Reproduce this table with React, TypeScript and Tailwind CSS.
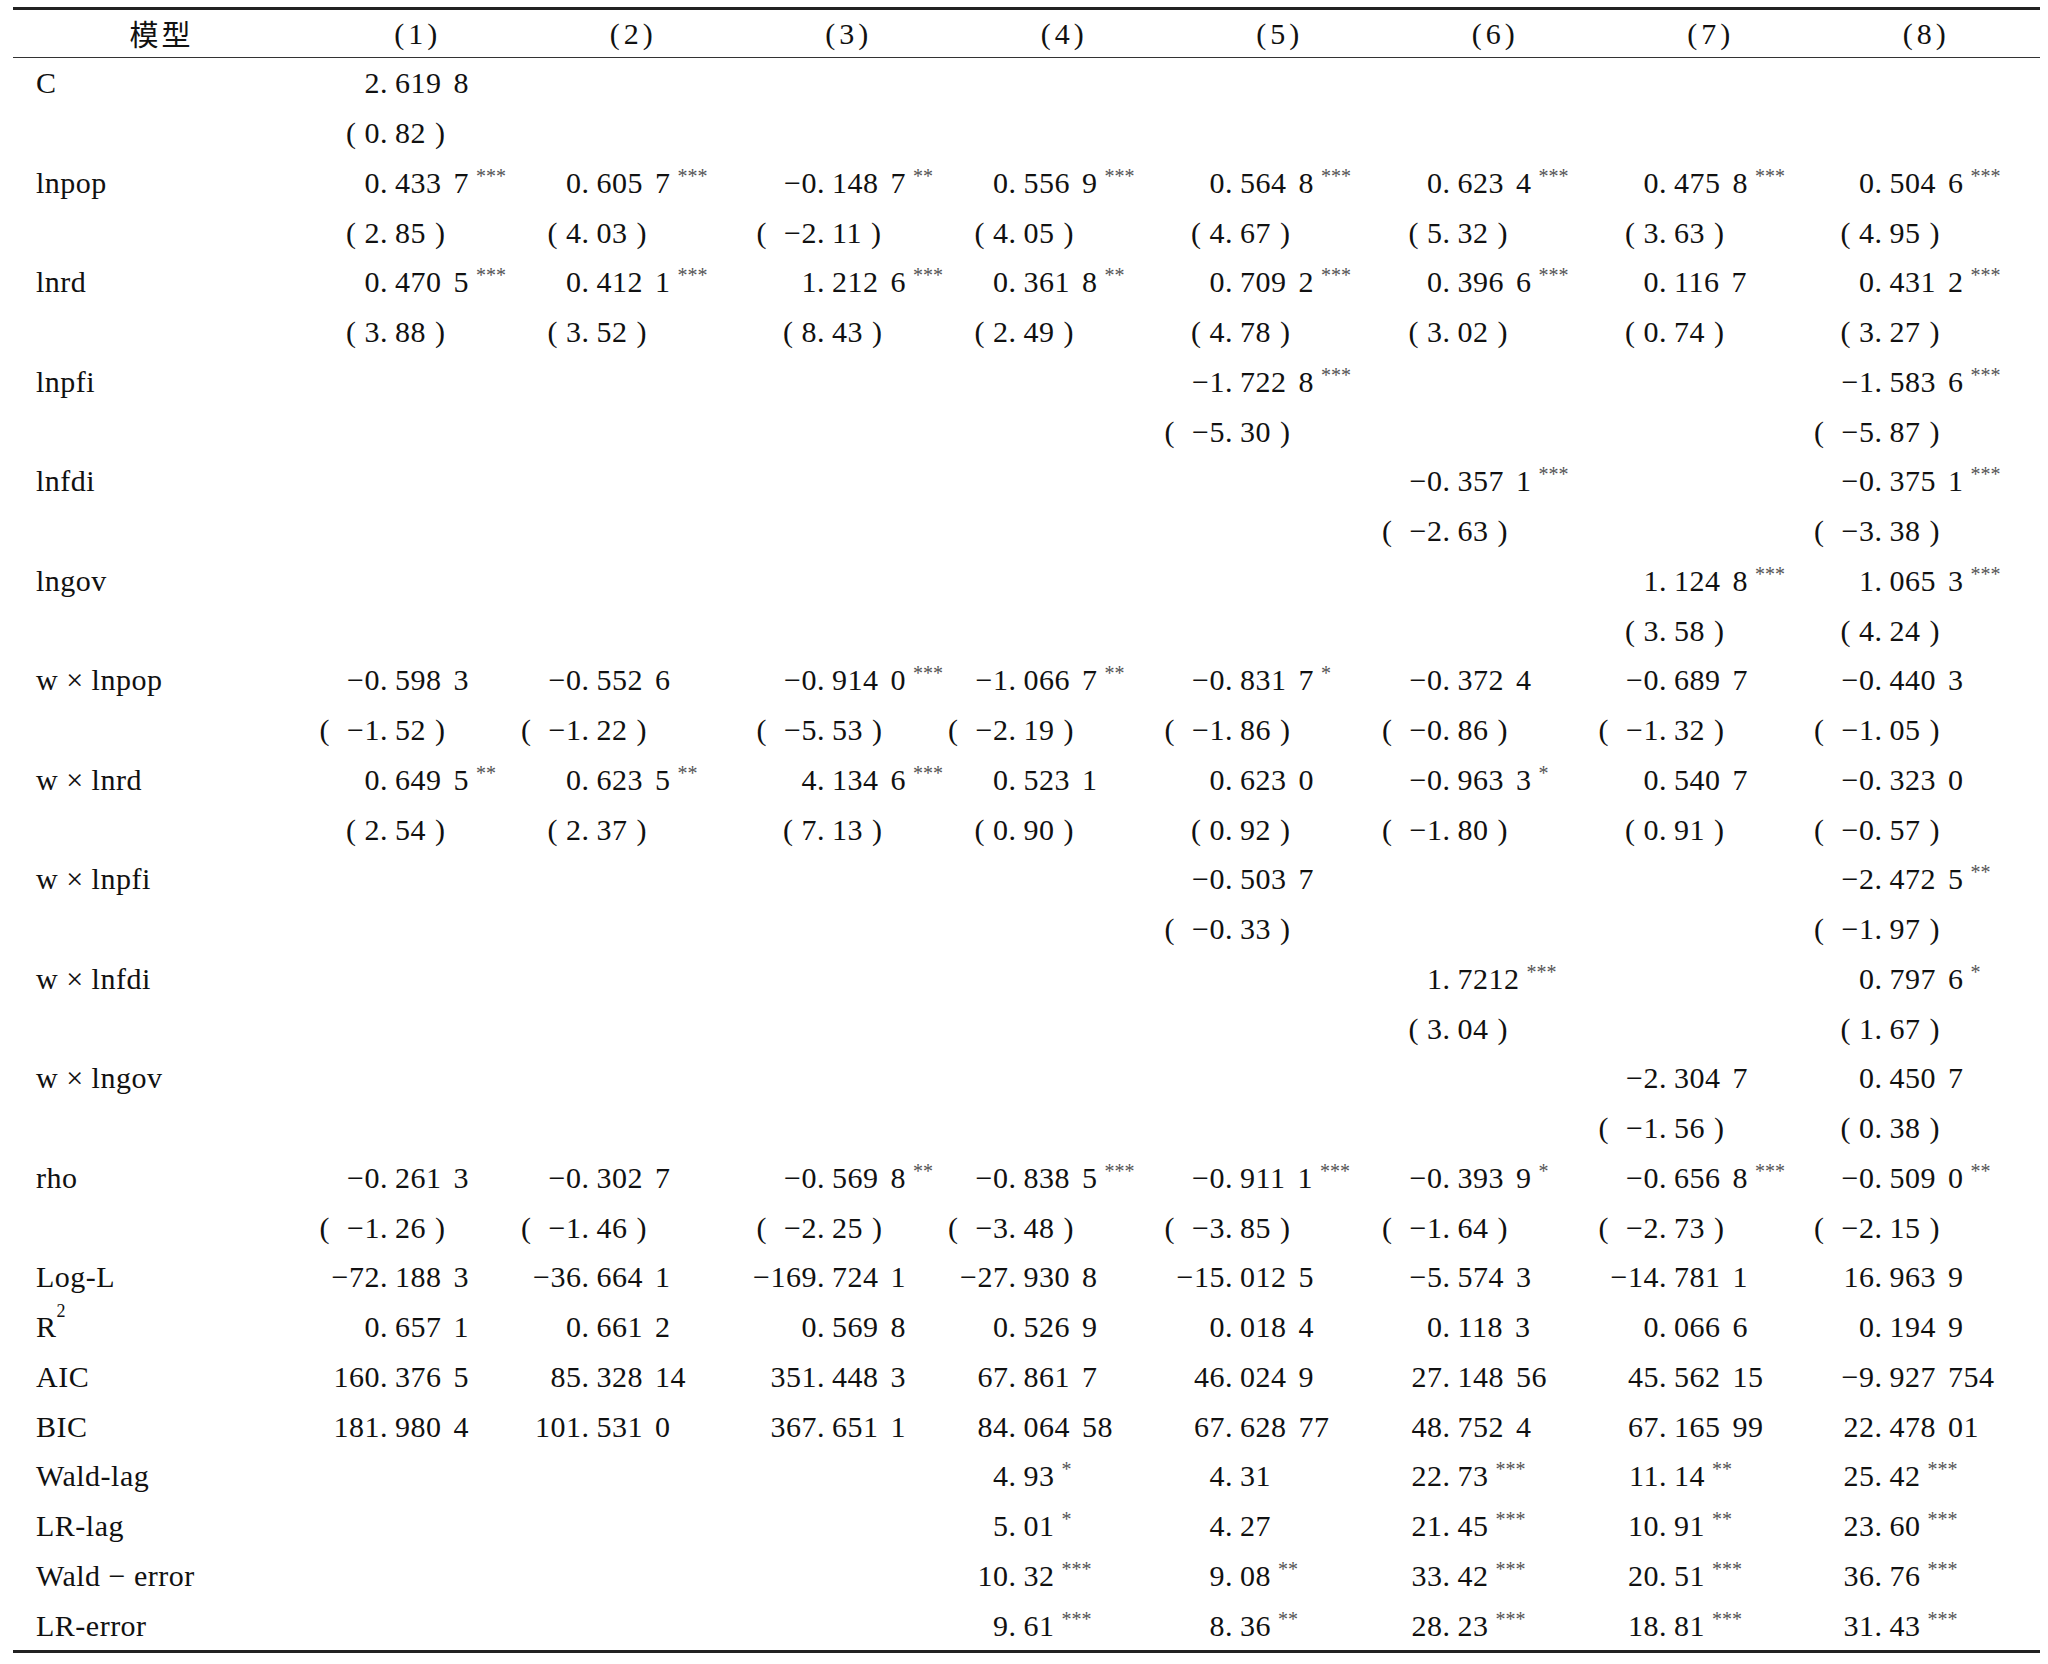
import React from "react";

// decimal point offset inside each of the 8 model columns
const intW = [
  "w-[70px]",
  "w-[56px]",
  "w-[76px]",
  "w-[52px]",
  "w-[53px]",
  "w-[55px]",
  "w-[56px]",
  "w-[56px]",
];

type Row = { label: React.ReactNode; vals: (string | null)[] };

const _ = null;

const rows: Row[] = [
  { label: "C", vals: ["2.619 8", _, _, _, _, _, _, _] },
  { label: "", vals: ["(0.82)", _, _, _, _, _, _, _] },
  {
    label: "lnpop",
    vals: ["0.433 7***", "0.605 7***", "−0.148 7**", "0.556 9***", "0.564 8***", "0.623 4***", "0.475 8***", "0.504 6***"],
  },
  { label: "", vals: ["(2.85)", "(4.03)", "( −2.11)", "(4.05)", "(4.67)", "(5.32)", "(3.63)", "(4.95)"] },
  {
    label: "lnrd",
    vals: ["0.470 5***", "0.412 1***", "1.212 6***", "0.361 8**", "0.709 2***", "0.396 6***", "0.116 7", "0.431 2***"],
  },
  { label: "", vals: ["(3.88)", "(3.52)", "(8.43)", "(2.49)", "(4.78)", "(3.02)", "(0.74)", "(3.27)"] },
  { label: "lnpfi", vals: [_, _, _, _, "−1.722 8***", _, _, "−1.583 6***"] },
  { label: "", vals: [_, _, _, _, "( −5.30)", _, _, "( −5.87)"] },
  { label: "lnfdi", vals: [_, _, _, _, _, "−0.357 1***", _, "−0.375 1***"] },
  { label: "", vals: [_, _, _, _, _, "( −2.63)", _, "( −3.38)"] },
  { label: "lngov", vals: [_, _, _, _, _, _, "1.124 8***", "1.065 3***"] },
  { label: "", vals: [_, _, _, _, _, _, "(3.58)", "(4.24)"] },
  {
    label: "w × lnpop",
    vals: ["−0.598 3", "−0.552 6", "−0.914 0***", "−1.066 7**", "−0.831 7*", "−0.372 4", "−0.689 7", "−0.440 3"],
  },
  {
    label: "",
    vals: ["( −1.52)", "( −1.22)", "( −5.53)", "( −2.19)", "( −1.86)", "( −0.86)", "( −1.32)", "( −1.05)"],
  },
  {
    label: "w × lnrd",
    vals: ["0.649 5**", "0.623 5**", "4.134 6***", "0.523 1", "0.623 0", "−0.963 3*", "0.540 7", "−0.323 0"],
  },
  { label: "", vals: ["(2.54)", "(2.37)", "(7.13)", "(0.90)", "(0.92)", "( −1.80)", "(0.91)", "( −0.57)"] },
  { label: "w × lnpfi", vals: [_, _, _, _, "−0.503 7", _, _, "−2.472 5**"] },
  { label: "", vals: [_, _, _, _, "( −0.33)", _, _, "( −1.97)"] },
  { label: "w × lnfdi", vals: [_, _, _, _, _, "1.7212***", _, "0.797 6*"] },
  { label: "", vals: [_, _, _, _, _, "(3.04)", _, "(1.67)"] },
  { label: "w × lngov", vals: [_, _, _, _, _, _, "−2.304 7", "0.450 7"] },
  { label: "", vals: [_, _, _, _, _, _, "( −1.56)", "(0.38)"] },
  {
    label: "rho",
    vals: ["−0.261 3", "−0.302 7", "−0.569 8**", "−0.838 5***", "−0.911 1***", "−0.393 9*", "−0.656 8***", "−0.509 0**"],
  },
  {
    label: "",
    vals: ["( −1.26)", "( −1.46)", "( −2.25)", "( −3.48)", "( −3.85)", "( −1.64)", "( −2.73)", "( −2.15)"],
  },
  {
    label: "Log-L",
    vals: ["−72.188 3", "−36.664 1", "−169.724 1", "−27.930 8", "−15.012 5", "−5.574 3", "−14.781 1", "16.963 9"],
  },
  {
    label: (
      <>
        R<sup className="text-[18px] align-[11px]">2</sup>
      </>
    ),
    vals: ["0.657 1", "0.661 2", "0.569 8", "0.526 9", "0.018 4", "0.118 3", "0.066 6", "0.194 9"],
  },
  {
    label: "AIC",
    vals: ["160.376 5", "85.328 14", "351.448 3", "67.861 7", "46.024 9", "27.148 56", "45.562 15", "−9.927 754"],
  },
  {
    label: "BIC",
    vals: ["181.980 4", "101.531 0", "367.651 1", "84.064 58", "67.628 77", "48.752 4", "67.165 99", "22.478 01"],
  },
  { label: "Wald-lag", vals: [_, _, _, "4.93*", "4.31", "22.73***", "11.14**", "25.42***"] },
  { label: "LR-lag", vals: [_, _, _, "5.01*", "4.27", "21.45***", "10.91**", "23.60***"] },
  { label: "Wald − error", vals: [_, _, _, "10.32***", "9.08**", "33.42***", "20.51***", "36.76***"] },
  { label: "LR-error", vals: [_, _, _, "9.61***", "8.36**", "28.23***", "18.81***", "31.43***"] },
];

function Cell({ value, col }: { value: string | null; col: number }) {
  if (!value) return <div className="w-[215.5px] shrink-0" />;
  const m = value.match(/^(.*?)(\**)$/);
  const body = m ? m[1] : value;
  const stars = m ? m[2] : "";
  const dot = body.indexOf(".");
  let intPart = dot >= 0 ? body.slice(0, dot) : body;
  let fracPart = dot >= 0 ? body.slice(dot + 1) : "";
  const open = intPart.startsWith("(");
  const close = fracPart.endsWith(")");
  const neg = intPart.includes("−");
  if (open) intPart = intPart.slice(1);
  if (close) fracPart = fracPart.slice(0, -1);
  return (
    <div className="w-[215.5px] shrink-0 flex items-center">
      <div className={`${intW[col]} shrink-0 flex justify-end whitespace-pre`}>
        {open && <span className={neg ? "mr-[5px]" : "mr-[8px]"}>(</span>}
        <span>{intPart}</span>
      </div>
      <span className="whitespace-pre">
        <span className="mr-[7px]">.</span>
        {fracPart}
      </span>
      {close && <span className="ml-[9px]">)</span>}
      {stars && (
        <span className="text-[20px] text-[#555] tracking-[0px] self-start mt-[6px] ml-[7px] leading-none">
          {stars}
        </span>
      )}
    </div>
  );
}

export default function App() {
  return (
    <div className="w-[2048px] h-[1664px] bg-white pt-[7px]">
      <div
        className="ml-[13px] w-[2027px] border-t-[3px] border-b-[3px] border-[#222] text-[30px] tracking-[0.5px] [word-spacing:4px] text-[#111]"
        style={{ fontFamily: '"Liberation Serif", "Noto Sans CJK SC", serif' }}
      >
        {/* header */}
        <div className="flex h-[48px] items-center border-b-[1.5px] border-[#333]">
          <div
            className="w-[297px] shrink-0 text-center text-[29px] tracking-[3px]"
            style={{ fontFamily: '"Noto Sans CJK SC", serif' }}
          >
            模型
          </div>
          {[1, 2, 3, 4, 5, 6, 7, 8].map((n) => (
            <div key={n} className="w-[215.5px] shrink-0 text-center tracking-[4px]">
              ({n})
            </div>
          ))}
        </div>

        {rows.map((r, i) => (
          <div key={i} className="flex h-[49.75px] items-center">
            <div className="w-[297px] shrink-0 pl-[23px] whitespace-pre [word-spacing:0px]">{r.label}</div>
            {r.vals.map((v, c) => (
              <Cell key={c} value={v} col={c} />
            ))}
          </div>
        ))}
      </div>
    </div>
  );
}
